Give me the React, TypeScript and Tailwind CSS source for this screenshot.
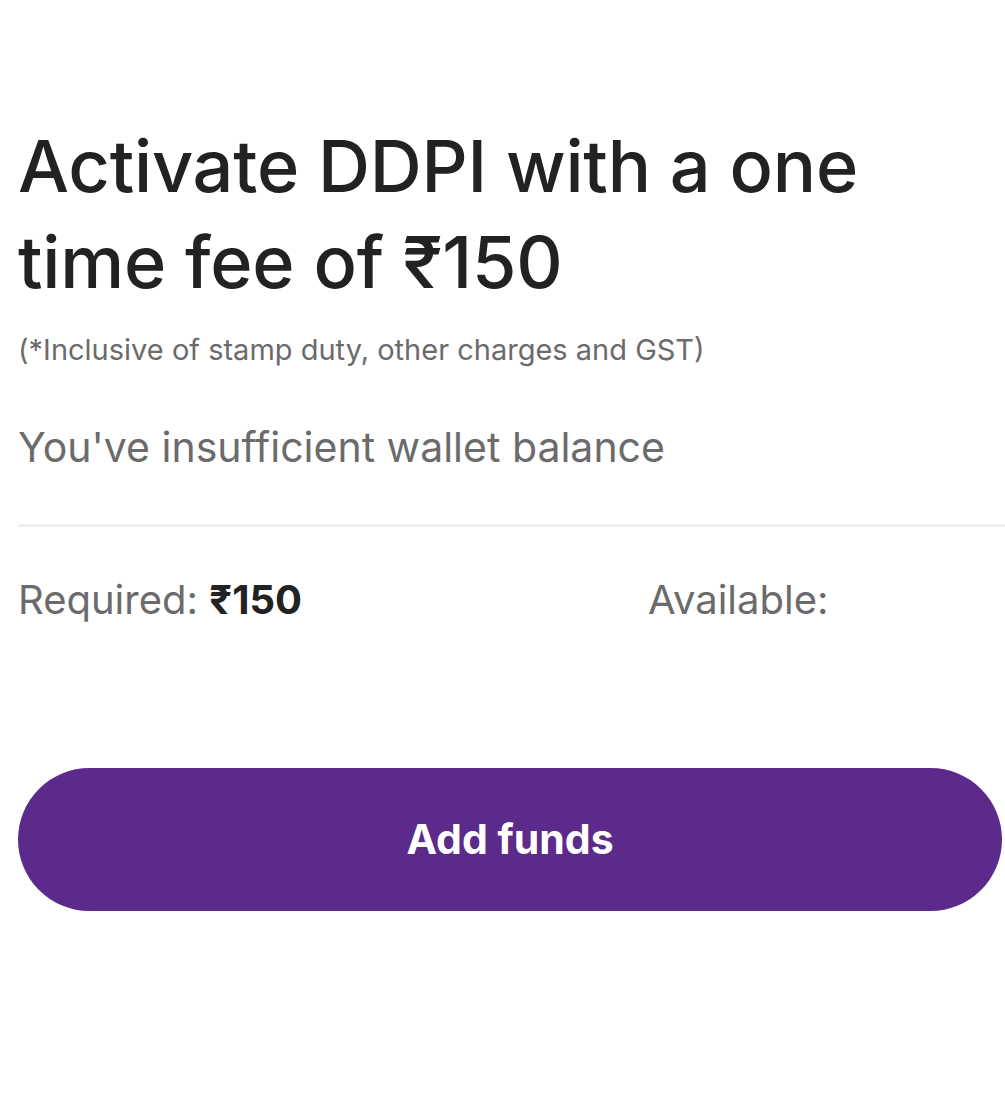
const App = () => {
  return (
    <div
      className="w-[1005px] h-[1120px] bg-white overflow-hidden pl-[18px] pt-[118px]"
      style={{ fontFamily: "Inter, 'Noto Sans', sans-serif" }}
    >
      <h1 className="text-[72px] leading-[96px] font-medium text-[#222222] tracking-[-0.2px]">
        Activate DDPI with a one
        <br />
        time fee of ₹150
      </h1>
      <p className="mt-[22px] text-[29px] leading-[36px] text-[#6b6b6b]">
        (*Inclusive of stamp duty, other charges and GST)
      </p>
      <p className="mt-[55px] text-[41px] leading-[48px] text-[#6b6b6b]">
        You've insufficient wallet balance
      </p>
      <div className="mt-[53px] h-[3px] bg-[#efefef]" />
      <div className="mt-[46px] flex items-center text-[40px] leading-[54px] text-[#6b6b6b]">
        <div className="w-[630px] shrink-0">
          Required: <span className="font-bold text-[#222222]">₹150</span>
        </div>
        <div className="w-[179px] overflow-hidden whitespace-nowrap">
          Available: <span className="font-bold text-[#222222]">₹0</span>
        </div>
      </div>
      <button className="mt-[141px] w-[984px] h-[143px] rounded-full bg-[#5b2a8a] text-white text-[41px] font-bold">
        Add funds
      </button>
    </div>
  );
};

export default App;
